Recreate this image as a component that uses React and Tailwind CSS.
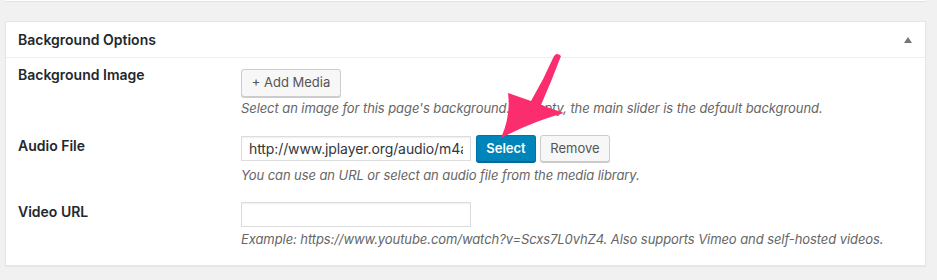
import React from 'react';

const font = { fontFamily: 'Inter, "Liberation Sans", sans-serif' };

const Arrow = () => (
    <svg className="absolute left-[495px] top-[50px] w-[75px] h-[95px] pointer-events-none" viewBox="495 50 75 95">
        <path
            d="M508 93 L531 101 Q544 79 554 56 Q557 52 561 56 Q552 80 541 105 L564 113 Q534 121 501 138 Q511 116 508 93 Z"
            fill="#fb2d6e"
        />
    </svg>
);

const App = () => {
    return (
        <div className="relative w-[937px] h-[280px] bg-[#f1f1f1] overflow-hidden" style={font}>
            <div className="ml-[5px] w-[921px] h-[2px] bg-white border-b border-[#e2e2e2]" />
            <div className="ml-[5px] mt-[19px] w-[921px] bg-white border border-[#e5e5e5] shadow-[0_1px_1px_rgba(0,0,0,0.04)]">
                <div className="flex items-center justify-between h-[36px] pl-[12px] pr-[13px] border-b border-[#eeeeee]">
                    <h2 className="text-[14px] font-semibold text-[#23282d]">Background Options</h2>
                    <svg width="8" height="6" viewBox="0 0 8 6"><polygon points="4,0 8,6 0,6" fill="#72777c" /></svg>
                </div>
                <div className="pl-[12px] pb-[17px] text-[#23282d]">
                    <div className="flex pt-[7px]">
                        <div className="w-[223px] text-[14px] leading-[20px] font-semibold">Background Image</div>
                        <div className="pt-[4px]">
                            <button className="h-[28px] w-[100px] rounded-[3px] border border-[#cccccc] bg-[#f7f7f7] text-[13px] text-[#555] shadow-[0_1px_0_#cccccc]">+ Add Media</button>
                            <p className="mt-[2px] text-[13px] leading-[18px] italic tracking-[-0.08px] text-[#666]">Select an image for this page's background. If empty, the main slider is the default background.</p>
                        </div>
                    </div>
                    <div className="flex pt-[18px]">
                        <div className="w-[223px] pt-[1px] text-[14px] leading-[20px] font-semibold">Audio File</div>
                        <div>
                            <div className="flex items-center h-[27px]">
                                <input
                                    readOnly
                                    value="http://www.jplayer.org/audio/m4a/Miaow-07-Bubble.m4a"
                                    className="h-[25px] w-[230px] border border-[#dddddd] px-[7px] text-[14px] tracking-[-0.1px] text-[#32373c] shadow-[inset_0_1px_2px_rgba(0,0,0,0.07)] outline-none"
                                    style={font}
                                />
                                <button className="ml-[5px] h-[27px] w-[60px] rounded-[3px] border border-[#0073aa] border-b-[#006799] bg-[#0085ba] text-[13px] font-semibold text-white shadow-[0_1px_0_#006799]">Select</button>
                                <button className="ml-[4px] h-[27px] w-[70px] rounded-[3px] border border-[#cccccc] bg-[#f7f7f7] text-[13px] text-[#555] shadow-[0_1px_0_#cccccc]">Remove</button>
                            </div>
                            <p className="mt-[4px] text-[13px] leading-[18px] italic tracking-[-0.08px] text-[#666]">You can use an URL or select an audio file from the media library.</p>
                        </div>
                    </div>
                    <div className="flex pt-[18px]">
                        <div className="w-[223px] text-[14px] leading-[20px] font-semibold">Video URL</div>
                        <div>
                            <input
                                readOnly
                                value=""
                                className="block h-[25px] w-[230px] border border-[#dddddd] px-[7px] text-[14px] shadow-[inset_0_1px_2px_rgba(0,0,0,0.07)] outline-none"
                            />
                            <p className="mt-[3px] text-[13px] leading-[18px] italic tracking-[-0.08px] text-[#666]">Example: https://www.youtube.com/watch?v=Scxs7L0vhZ4. Also supports Vimeo and self-hosted videos.</p>
                        </div>
                    </div>
                </div>
            </div>
            <Arrow />
        </div>
    );
};

export default App;
